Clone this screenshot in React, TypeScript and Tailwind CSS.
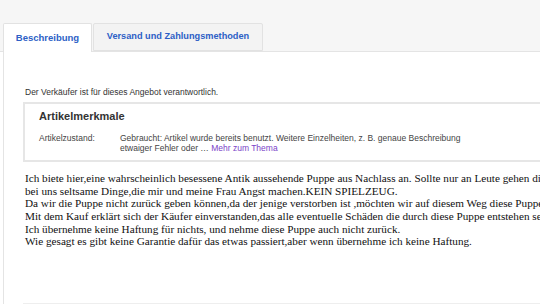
import React from "react";

export default function App() {
  const lines = [
    "Ich biete hier,eine wahrscheinlich besessene Antik aussehende Puppe aus Nachlass an. Sollte nur an Leute gehen die sich für sowas interessieren,denn es passieren",
    "bei uns seltsame Dinge,die mir und meine Frau Angst machen.KEIN SPIELZEUG.",
    "Da wir die Puppe nicht zurück geben können,da der jenige verstorben ist ,möchten wir auf diesem Weg diese Puppe los werden.",
    "Mit dem Kauf erklärt sich der Käufer einverstanden,das alle eventuelle Schäden die durch diese Puppe entstehen selbst zu tragen.",
    "Ich übernehme keine Haftung für nichts, und nehme diese Puppe auch nicht zurück.",
    "Wie gesagt es gibt keine Garantie dafür das etwas passiert,aber wenn übernehme ich keine Haftung.",
  ];
  return (
    <div className="w-[540px] h-[304px] overflow-hidden bg-white font-['Liberation_Sans',Arial,sans-serif] flex flex-col">
      <div className="h-[52px] shrink-0 bg-[#f6f6f6] flex items-end pl-[3px] border-b border-[#e4e4e4]">
        <div className="w-[89px] h-[29px] -mb-px bg-white border border-b-0 border-[#e2e2e2] rounded-t-[2px] flex items-center justify-center text-[9.5px] font-bold text-[#2d5fc6]">
          Beschreibung
        </div>
        <div className="ml-[1px] w-[170px] h-[28px] bg-[#f3f3f3] border border-[#e2e2e2] rounded-t-[2px] flex items-center justify-center text-[9.2px] font-bold text-[#2d5fc6]">
          Versand und Zahlungsmethoden
        </div>
      </div>
      <div className="flex-1 flex flex-col ml-[3px] border-l border-[#e4e4e4] pl-[19px] pt-[35px]">
        <div className="ml-[2px] text-[8.5px] leading-[10px] text-[#333]">
          Der Verkäufer ist für dieses Angebot verantwortlich.
        </div>
        <div className="mt-[5px] w-[600px] border-2 border-[#e6e6e6] border-r-0 pl-[14px] pt-[6px] pb-[7px]">
          <div className="text-[11px] leading-[13px] font-bold text-[#333]">Artikelmerkmale</div>
          <div className="mt-[10px] flex text-[8.5px] leading-[10px] text-[#444]">
            <div className="w-[81px] shrink-0">Artikelzustand:</div>
            <div>
              <div>Gebraucht: Artikel wurde bereits benutzt. Weitere Einzelheiten, z. B. genaue Beschreibung</div>
              <div>
                etwaiger Fehler oder … <span className="text-[#7a3fc8]">Mehr zum Thema</span>
              </div>
            </div>
          </div>
        </div>
        <div className="mt-[10px] ml-[2px] font-['Liberation_Serif','Times_New_Roman',serif] text-[11.2px] leading-[12.65px] text-[#111] whitespace-nowrap">
          {lines.map((l, i) => (
            <div key={i}>{l}</div>
          ))}
        </div>
        <div className="mt-auto w-[600px] border-t border-[#eeeeee]" />
      </div>
    </div>
  );
}
